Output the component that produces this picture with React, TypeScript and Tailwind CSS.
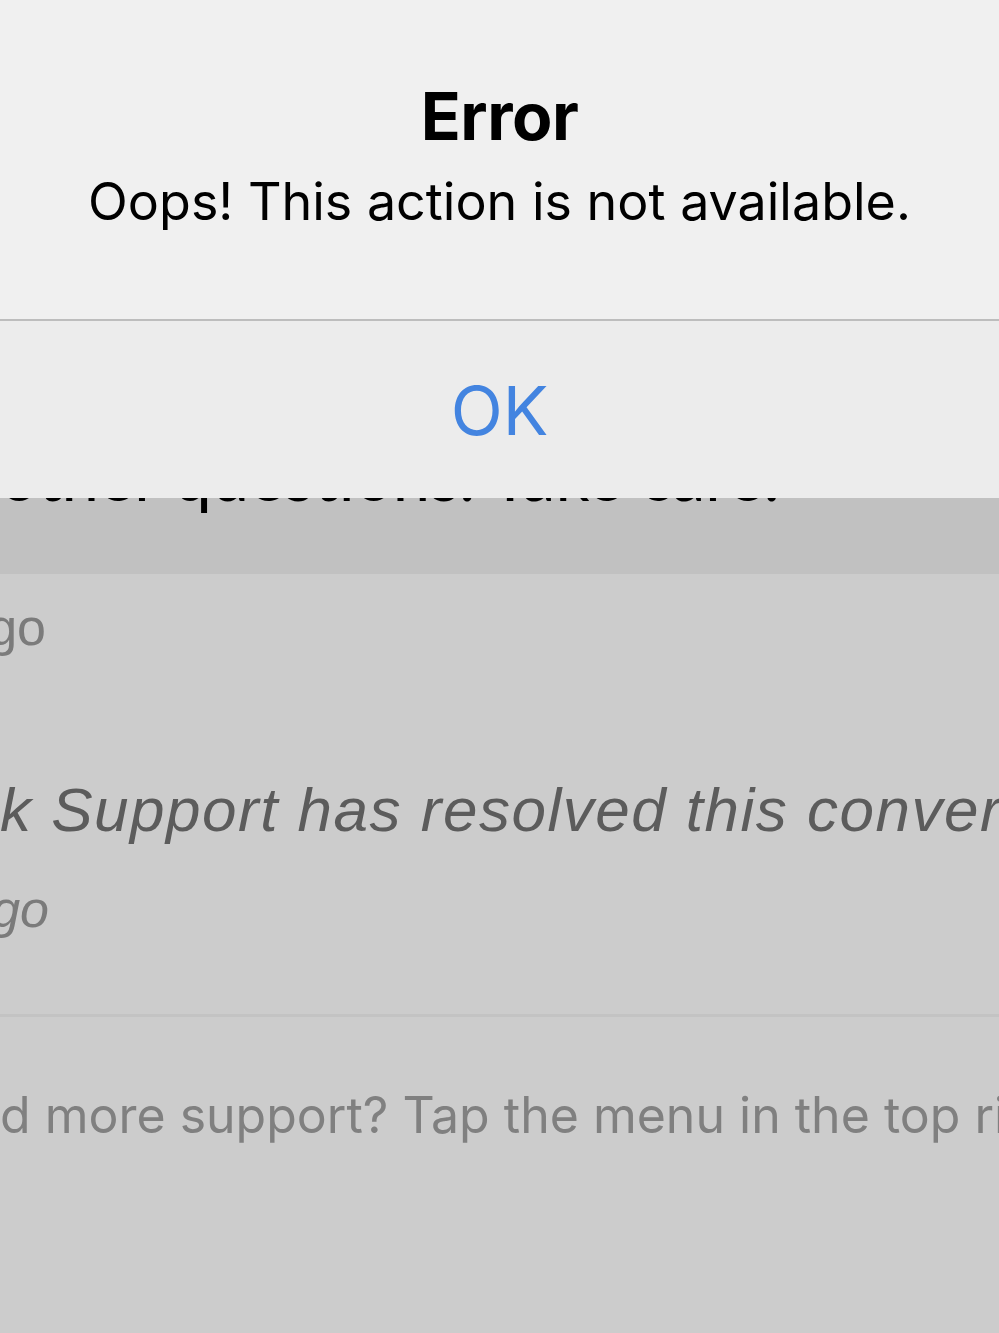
import { ReactNode } from 'react';

// pushes the start of a line off the left edge so only the tail shows
function Clipped({ hidden, shown }: { hidden: string; shown: string }) {
  return (
    <div className="flex whitespace-nowrap">
      <div className="w-0 flex justify-end">
        <span>{hidden}</span>
      </div>
      <span>{shown}</span>
    </div>
  );
}

function Row({ className, children }: { className: string; children: ReactNode }) {
  return <div className={className}>{children}</div>;
}

export default function App() {
  return (
    <div className="relative w-full h-[1333px] overflow-hidden bg-[#cccccc] font-['Liberation_Sans',sans-serif]">
      {/* dimmed chat behind the alert */}
      <div className="flex flex-col">
        <div className="h-[574px] bg-[#c1c1c1] flex flex-col justify-end pb-[65px]">
          <div className="text-[67px] leading-none text-black font-['Lato',sans-serif]">
            <Clipped hidden="Let us know if you have any " shown="other questions. Take care." />
          </div>
        </div>

        <Row className="mt-[27px] text-[52px] leading-none text-[#7b7b7b]">
          <div className="w-[46px] flex justify-end whitespace-nowrap">
            <span>2 days ago</span>
          </div>
        </Row>

        <Row className="mt-[126px] text-[62px] leading-none italic tracking-[1.5px] text-[#5c5c5c]">
          <Clipped hidden="Zendes" shown="k Support has resolved this conversation." />
        </Row>

        <Row className="mt-[42px] text-[52px] leading-none italic text-[#7b7b7b]">
          <div className="w-[49px] flex justify-end whitespace-nowrap">
            <span>2 days ago</span>
          </div>
        </Row>

        <div className="mt-[79px] h-[3px] bg-[#c3c3c3]" />

        <Row className="mt-[73px] text-[50px] leading-none text-[#808080] font-['Inter',sans-serif]">
          <Clipped hidden="Nee" shown="d more support? Tap the menu in the top right corner." />
        </Row>
      </div>

      {/* alert sheet */}
      <div className="absolute top-0 left-0 right-0 h-[498px] bg-[#ececec] flex flex-col font-['Inter',sans-serif]">
        <div className="h-[319px] flex flex-col items-center bg-[#f0f0f0]">
          <div className="mt-[83px] text-[66px] leading-none font-bold text-black tracking-[-0.5px]">Error</div>
          <div className="mt-[27px] text-[52px] leading-none text-black">Oops! This action is not available.</div>
        </div>
        <div className="h-[2px] bg-[#bdbdbd]" />
        <div className="flex-1 flex justify-center">
          <span className="mt-[55px] text-[68px] leading-none text-[#4384e0]">OK</span>
        </div>
      </div>
    </div>
  );
}
